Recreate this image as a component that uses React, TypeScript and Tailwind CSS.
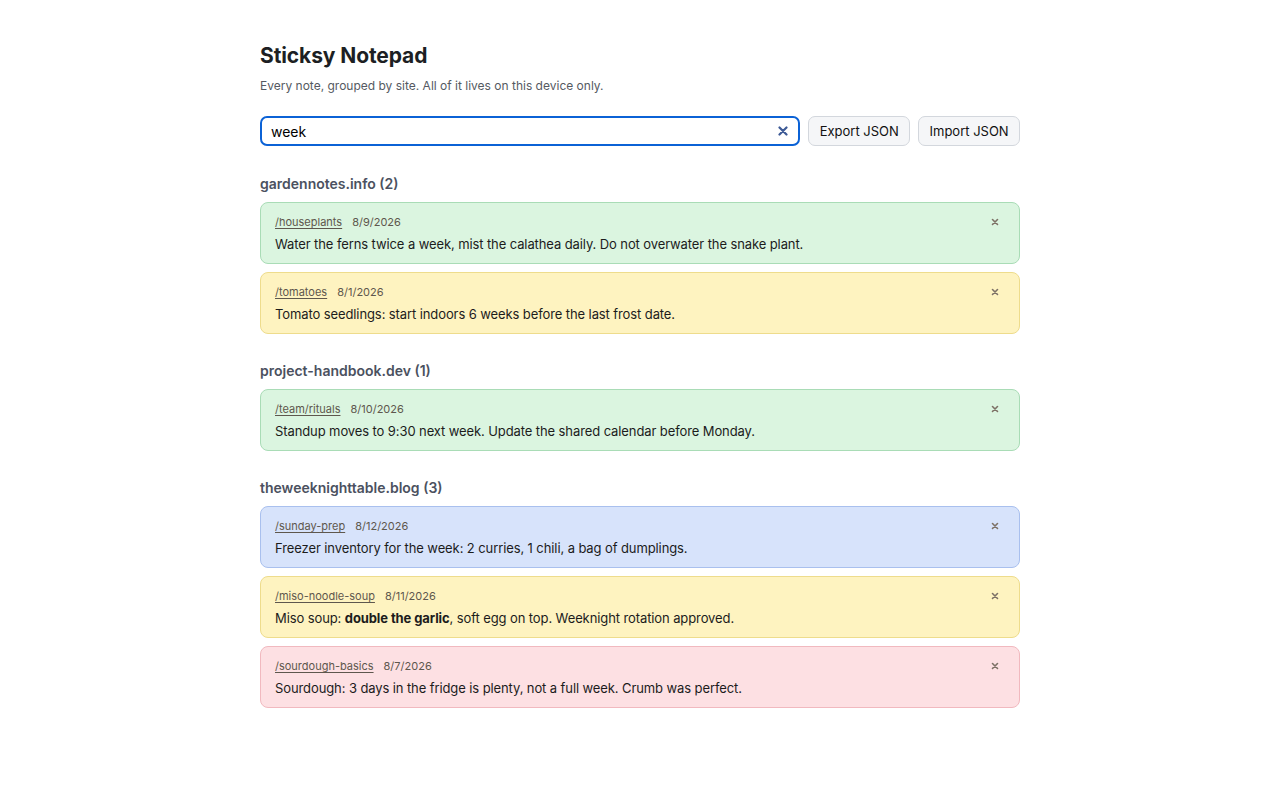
import React from "react";

type Note = { path: string; date: string; color: "green" | "yellow" | "blue" | "red"; body: React.ReactNode };
type Group = { site: string; notes: Note[] };

const colors: Record<Note["color"], string> = {
  green: "bg-[#dbf5e0] border-[#a9dcb6]",
  yellow: "bg-[#fef3c0] border-[#eedc8c]",
  blue: "bg-[#d7e3fb] border-[#a9c0ee]",
  red: "bg-[#fde0e3] border-[#f1b9bf]",
};

const groups: Group[] = [
  {
    site: "gardennotes.info",
    notes: [
      { path: "/houseplants", date: "8/9/2026", color: "green", body: "Water the ferns twice a week, mist the calathea daily. Do not overwater the snake plant." },
      { path: "/tomatoes", date: "8/1/2026", color: "yellow", body: "Tomato seedlings: start indoors 6 weeks before the last frost date." },
    ],
  },
  {
    site: "project-handbook.dev",
    notes: [
      { path: "/team/rituals", date: "8/10/2026", color: "green", body: "Standup moves to 9:30 next week. Update the shared calendar before Monday." },
    ],
  },
  {
    site: "theweeknighttable.blog",
    notes: [
      { path: "/sunday-prep", date: "8/12/2026", color: "blue", body: "Freezer inventory for the week: 2 curries, 1 chili, a bag of dumplings." },
      {
        path: "/miso-noodle-soup",
        date: "8/11/2026",
        color: "yellow",
        body: (
          <>
            Miso soup: <b className="font-bold">double the garlic</b>, soft egg on top. Weeknight rotation approved.
          </>
        ),
      },
      { path: "/sourdough-basics", date: "8/7/2026", color: "red", body: "Sourdough: 3 days in the fridge is plenty, not a full week. Crumb was perfect." },
    ],
  },
];

function NoteCard({ note }: { note: Note }) {
  return (
    <div className={`relative rounded-[8px] border px-[14px] pt-[11px] pb-[10px] ${colors[note.color]}`}>
      <div className="flex items-center gap-[10px] text-[11px] leading-[16px] text-[#5e574d]">
        <span className="underline underline-offset-[2px]">{note.path}</span>
        <span>{note.date}</span>
      </div>
      <div className="mt-[5px] text-[13px] leading-[18px] tracking-[-0.1px] text-[#1c1c1c]">{note.body}</div>
      <button className="absolute right-[18px] top-[11px] flex h-[16px] w-[12px] items-center justify-center text-[#7d7166]">
        <svg width="8" height="8" viewBox="0 0 8 8" fill="none" stroke="currentColor" strokeWidth="1.6" strokeLinecap="round">
          <path d="M1.5 1.5 L6.5 6.5 M6.5 1.5 L1.5 6.5" />
        </svg>
      </button>
    </div>
  );
}

export default function App() {
  return (
    <div className="min-h-screen bg-white font-['Inter',sans-serif]">
      <div className="mx-auto w-[760px] pt-[42px] pb-[60px]">
        <h1 className="text-[21px] font-bold leading-[28px] tracking-[-0.1px] text-[#1d1f23]">Sticksy Notepad</h1>
        <p className="mt-[8px] text-[12px] leading-[16px] text-[#555a62]">
          Every note, grouped by site. All of it lives on this device only.
        </p>
        <div className="mt-[22px] flex items-center gap-[8px]">
          <div className="relative flex h-[30px] w-[541px] items-center rounded-[7px] border-2 border-[#0b62d6] bg-white pl-[9px] pr-[10px]">
            <span className="flex-1 text-[14px] text-black">week</span>
            <svg width="10" height="10" viewBox="0 0 10 10" fill="none" stroke="#3d5a96" strokeWidth="2.2" strokeLinecap="round">
              <path d="M1.5 1.5 L8.5 8.5 M8.5 1.5 L1.5 8.5" />
            </svg>
          </div>
          <button className="h-[30px] w-[102px] rounded-[7px] border border-[#d3d7dd] bg-[#f5f6f8] pt-[1px] text-[13px] text-[#111]">
            Export JSON
          </button>
          <button className="h-[30px] w-[102px] rounded-[7px] border border-[#d3d7dd] bg-[#f5f6f8] pt-[1px] text-[13px] text-[#111]">
            Import JSON
          </button>
        </div>
        <div className="mt-[28px] flex flex-col gap-[27px]">
          {groups.map((g) => (
            <section key={g.site}>
              <h2 className="text-[14px] font-semibold leading-[20px] text-[#4b5160]">
                {g.site} ({g.notes.length})
              </h2>
              <div className="mt-[8px] flex flex-col gap-[8px]">
                {g.notes.map((n) => (
                  <NoteCard key={n.path} note={n} />
                ))}
              </div>
            </section>
          ))}
        </div>
      </div>
    </div>
  );
}
